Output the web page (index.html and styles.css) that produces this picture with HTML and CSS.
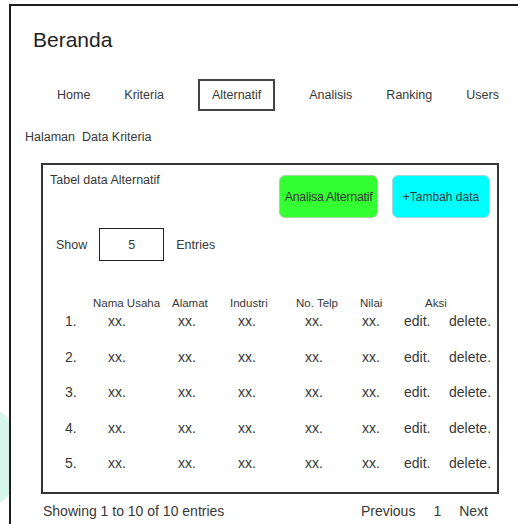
FILE: index.html
```html
<!DOCTYPE html>
<html lang="id">
<head>
<meta charset="utf-8">
<title>Beranda</title>
<link rel="stylesheet" href="styles.css">
</head>
<body>
<div class="blob"></div>
<div class="frame">
  <h1 class="title">Beranda</h1>

  <nav class="nav">
    <a class="nav-item">Home</a>
    <a class="nav-item">Kriteria</a>
    <a class="nav-item active">Alternatif</a>
    <a class="nav-item">Analisis</a>
    <a class="nav-item">Ranking</a>
    <a class="nav-item">Users</a>
  </nav>

  <p class="crumb">Halaman&nbsp; Data Kriteria</p>

  <section class="card">
    <div class="card-top">
      <span class="card-title">Tabel data Alternatif</span>
      <div class="actions">
        <button class="btn btn-green">Analisa Alternatif</button>
        <button class="btn btn-cyan">+Tambah data</button>
      </div>
    </div>

    <div class="show-row">
      <span>Show</span>
      <span class="show-box">5</span>
      <span>Entries</span>
    </div>

    <div class="table">
      <div class="thead">
        <span>Nama Usaha</span>
        <span>Alamat</span>
        <span>Industri</span>
        <span>No. Telp</span>
        <span>Nilai</span>
        <span>Aksi</span>
      </div>
      <div class="trow"><span>1.</span><span>xx.</span><span>xx.</span><span>xx.</span><span>xx.</span><span>xx.</span><span>edit.</span><span>delete.</span></div>
      <div class="trow"><span>2.</span><span>xx.</span><span>xx.</span><span>xx.</span><span>xx.</span><span>xx.</span><span>edit.</span><span>delete.</span></div>
      <div class="trow"><span>3.</span><span>xx.</span><span>xx.</span><span>xx.</span><span>xx.</span><span>xx.</span><span>edit.</span><span>delete.</span></div>
      <div class="trow"><span>4.</span><span>xx.</span><span>xx.</span><span>xx.</span><span>xx.</span><span>xx.</span><span>edit.</span><span>delete.</span></div>
      <div class="trow"><span>5.</span><span>xx.</span><span>xx.</span><span>xx.</span><span>xx.</span><span>xx.</span><span>edit.</span><span>delete.</span></div>
    </div>
  </section>

  <footer class="pager">
    <span>Showing 1 to 10 of 10 entries</span>
    <div class="pages">
      <span>Previous</span>
      <span>1</span>
      <span>Next</span>
    </div>
  </footer>
</div>
</body>
</html>
```

FILE: styles.css
```css
* {
  box-sizing: border-box;
}

html, body {
  margin: 0;
  padding: 0;
  background: #ffffff;
  overflow: hidden;
}

body {
  font-family: "Liberation Sans", Arial, sans-serif;
  color: #383838;
  position: relative;
  min-height: 524px;
}

/* soft decorative shape peeking in at the left edge, behind the frame */
.blob {
  position: absolute;
  z-index: 0;
  left: -91px;
  top: 400px;
  width: 114px;
  height: 114px;
  border-radius: 50%;
  background: #d6f6eb;
}

/* page frame: open on the right and bottom */
.frame {
  position: relative;
  z-index: 1;
  margin: 4px 0 0 9px;
  background: #ffffff;
  border-left: 2px solid #1e1e1e;
  border-top: 2px solid #1e1e1e;
  min-height: 520px;
}

.title {
  margin: 22px 0 0 22px;
  font-size: 21px;
  line-height: 24px;
  font-weight: normal;
  color: #222222;
}

.nav {
  display: flex;
  gap: 34px;
  margin: 27px 0 0 46px;
}

.nav-item {
  height: 32px;
  display: flex;
  align-items: center;
  font-size: 12.5px;
}

.nav-item.active {
  padding: 0 12px;
  border: 2px solid #444444;
}

.crumb {
  margin: 18px 0 0 14px;
  font-size: 12.5px;
  line-height: 16px;
}

.card {
  margin: 18px 0 0 30px;
  width: 458px;
  border: 2px solid #333333;
  padding: 7px 7px 18px 7px;
}

.card-top {
  display: flex;
  justify-content: space-between;
  align-items: flex-start;
}

.card-title {
  font-size: 12.5px;
  line-height: 16px;
}

.actions {
  display: flex;
  gap: 14px;
  margin-top: 3px;
}

.btn {
  height: 43px;
  border-radius: 6px;
  font-family: inherit;
  color: #383838;
  padding: 0;
  white-space: nowrap;
  display: flex;
  align-items: center;
  justify-content: center;
}

.btn-green {
  width: 99px;
  background: #33ff33;
  border: 1px solid #a6d6a6;
  font-size: 12.5px;
  letter-spacing: -0.3px;
}

.btn-cyan {
  width: 98px;
  background: #00ffff;
  border: 1px solid #a6d6d6;
  font-size: 12px;
}

.show-row {
  display: flex;
  align-items: center;
  gap: 12px;
  margin: 10px 0 0 6px;
  font-size: 12.5px;
}

.show-box {
  width: 65px;
  height: 33px;
  border: 1px solid #222222;
  display: flex;
  align-items: center;
  justify-content: center;
}

.table {
  margin-top: 35px;
  display: flex;
  flex-direction: column;
  gap: 13.5px;
}

.thead {
  display: grid;
  grid-template-columns: 79px 58px 66px 64px 65px auto;
  padding-left: 43px;
  font-size: 11.5px;
  line-height: 14px;
  margin-bottom: -13.5px;
}

.trow {
  display: grid;
  grid-template-columns: 43px 70px 60px 67px 57px 42px 45px auto;
  padding-left: 15px;
  font-size: 14px;
  line-height: 22px;
}

.pager {
  display: flex;
  justify-content: space-between;
  width: 458px;
  margin: 9px 0 0 31px;
  padding: 0 12px 0 1px;
  font-size: 14px;
  line-height: 16px;
}

.pages {
  display: flex;
  gap: 18px;
}
```
